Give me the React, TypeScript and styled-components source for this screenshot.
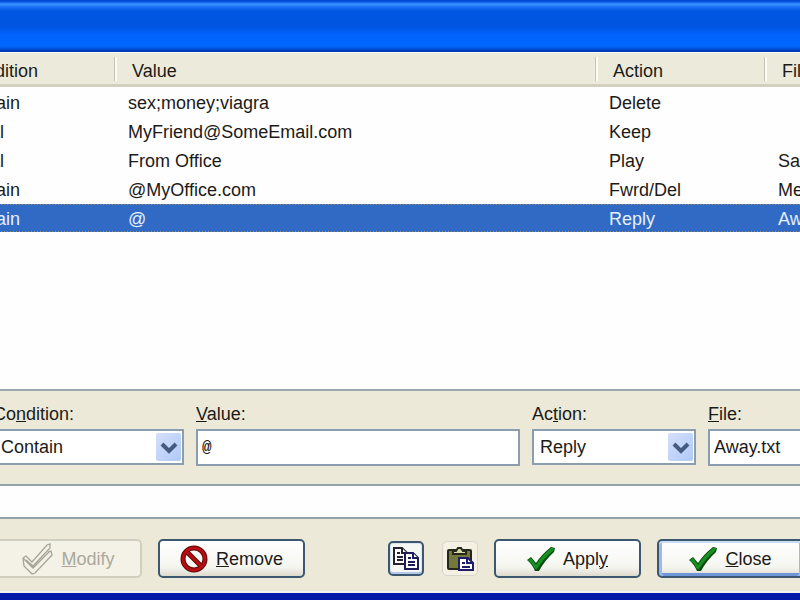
import React from "react";
import styled, { createGlobalStyle, css } from "styled-components";

const Global = createGlobalStyle`
  *, *::before, *::after { box-sizing: border-box; }
  body {
    margin: 0;
    overflow: hidden;
    background: #ece9d8;
    color: #1c1a17;
    font: 18px/24px "Liberation Sans", Arial, sans-serif;
  }
`;

const Viewport = styled.main`
  overflow: hidden;
`;

const Dialog = styled.div`
  display: flex;
  flex-direction: column;
  min-height: 100vh;
  margin: 0 -56px;
  background: #ece9d8;
  border-bottom: 7px solid #0019a8;
`;

const TitleBar = styled.header`
  height: 52px;
  flex: none;
  background: linear-gradient(
    #0040cc 0,
    #0a5ae6 2px,
    #3d95ff 4px,
    #1a70f5 7px,
    #0057e2 11px,
    #0054e0 26px,
    #0062fb 34px,
    #0068ff 46px,
    #0050d8 49px,
    #0038b4 51px
  );
`;

const RuleList = styled.section`
  flex: 1;
  background: #fefefe;
`;

const RuleTable = styled.table`
  width: 100%;
  table-layout: fixed;
  border-collapse: separate;
  border-spacing: 0 1px;
`;

const HeadCell = styled.th<{ $width?: number }>`
  position: relative;
  width: ${(p) => (p.$width ? `${p.$width}px` : "auto")};
  height: 34px;
  padding: 4px 0 0 18px;
  text-align: left;
  font-weight: normal;
  background: #ebeadb;
  border-bottom: 3px solid #d3d0c0;

  th + &::before {
    content: "";
    position: absolute;
    left: 0;
    top: 4px;
    width: 3px;
    height: 24px;
    background: #c7c5b2;
    border-right: 2px solid #fbfaf4;
  }
`;

const Row = styled.tr<{ $selected?: boolean }>`
  height: 28px;
  ${(p) =>
    p.$selected &&
    css`
      color: #e4f0fa;
      background:
        repeating-linear-gradient(90deg, #a08c58 0 1px, #316ac5 1px 3px) top / 100% 1px no-repeat,
        repeating-linear-gradient(90deg, #a08c58 0 1px, #316ac5 1px 3px) bottom / 100% 1px no-repeat,
        #316ac5;
    `}
`;

const Cell = styled.td`
  height: 28px;
  padding: 1px 0 0 14px;
  white-space: nowrap;
  overflow: hidden;
`;

const Editor = styled.form`
  display: grid;
  grid-template-columns: 191px minmax(0, 1fr) 164px 148px;
  column-gap: 12px;
  padding: 11px 0 18px 49px;
  border-top: 2px solid #9ba6ad;
`;

const Field = styled.div`
  display: flex;
  flex-direction: column;
  gap: 3px;
`;

const controlBox = css`
  width: 100%;
  color: #1c1a17;
  background: #fff;
  border: 2px solid #8b9eb0;
  border-radius: 0;
  outline: none;
  font: inherit;
`;

const TextBox = styled.input<{ $mono?: boolean }>`
  ${controlBox}
  height: 37px;
  padding: 0 4px;
  ${(p) => p.$mono && css`font-family: "Liberation Mono", monospace; font-size: 16px; font-weight: bold;`}
`;

const Combo = styled.div`
  position: relative;
`;

const Select = styled.select`
  ${controlBox}
  display: block;
  height: 36px;
  padding: 0 32px 0 6px;
  appearance: none;
`;

const ComboArrow = styled.svg`
  position: absolute;
  right: 3px;
  top: 4px;
  width: 25px;
  height: 28px;
  pointer-events: none;
`;

const StatusBox = styled.output`
  height: 35px;
  background: #fefefe;
  border: solid #93a1a9;
  border-width: 2px 0;
`;

const ButtonBar = styled.footer`
  display: flex;
  align-items: center;
  gap: 16px;
  padding: 20px 52px 13px 51px;
  border-bottom: 2px solid #f1f3ef;
`;

const IconGroup = styled.div`
  display: flex;
  align-items: center;
  gap: 18px;
  margin-left: auto;
`;

const PushButton = styled.button<{ $focused?: boolean }>`
  display: flex;
  align-items: center;
  justify-content: center;
  gap: 8px;
  width: 147px;
  height: 39px;
  padding: 0;
  color: #1c1a17;
  font: inherit;
  background: linear-gradient(#fff, #f5f5f0 75%, #dedace);
  border: 2px solid #3c5870;
  border-radius: 5px;
  ${(p) =>
    p.$focused &&
    css`
      box-shadow: inset 0 2px #cbdcfa, inset 3px 0 #9db9ea, inset -3px 0 #9db9ea,
        inset 0 -3px #6f94d8;
    `}
  &:disabled {
    color: #aaa99c;
    background: #f4f2e6;
    border-color: #d2cfc1;
  }
`;

const IconButton = styled.button<{ $flat?: boolean }>`
  display: grid;
  place-items: center;
  width: 36px;
  height: 35px;
  padding: 0;
  border: 2px solid #3c5870;
  border-radius: 5px;
  background: #f5f7f5;
  box-shadow: inset 0 -2px #b4c9e6, inset 0 0 0 1px #dbe5f2;
  ${(p) =>
    p.$flat &&
    css`
      border: 1px solid #d9d5ca;
      background: #f4f1e2;
      box-shadow: none;
    `}
`;

const Arrow = () => (
  <ComboArrow viewBox="0 0 25 28" aria-hidden="true">
    <defs>
      <linearGradient id="comboFill" x1="0" y1="0" x2="1" y2="1">
        <stop offset="0" stopColor="#d3e0fc" />
        <stop offset="1" stopColor="#b1c8f5" />
      </linearGradient>
    </defs>
    <rect width="25" height="28" rx="2" fill="url(#comboFill)" />
    <path d="M6 11L13 18L20 11" fill="none" stroke="#46597f" strokeWidth="4" />
  </ComboArrow>
);

const CheckIcon = () => (
  <svg width="28" height="26" viewBox="0 0 28 26" aria-hidden="true">
    <path d="M0 14L4 11L9 17Q15 8 24 1L28 2L27 6Q18 14 12 25L8 25Q5 18 0 14Z" fill="#0b4a12" />
    <path d="M1 14L4 12L9 19Q15 9 24 2L27 2L26 5Q17 12 10 23L8 23Q6 18 1 14Z" fill="#14921e" />
  </svg>
);

const DisabledCheckIcon = () => (
  <svg width="31" height="32" viewBox="0 0 31 32" aria-hidden="true">
    <path
      d="M1 15L4 13L10 19L25 2L28 1L28 5L11 23L4 17M1 15L2 23L10 31L13 30L30 12L29 8L26 9M1 15L11 25L28 8"
      fill="none"
      stroke="#a5a498"
      strokeWidth="1.3"
    />
  </svg>
);

const ForbidIcon = () => (
  <svg width="28" height="28" viewBox="0 0 28 28" aria-hidden="true">
    <circle cx="14" cy="14" r="11" fill="none" stroke="#5e0808" strokeWidth="5" />
    <path d="M6 6L22 22" stroke="#5e0808" strokeWidth="5" />
    <circle cx="14" cy="14" r="11" fill="none" stroke="#b50d12" strokeWidth="3" />
    <path d="M6 6L22 22" stroke="#b50d12" strokeWidth="3" />
  </svg>
);

const CopyIcon = () => (
  <svg width="28" height="26" viewBox="0 0 28 26" aria-hidden="true">
    <g fill="#fff" strokeWidth="2">
      <path d="M2 2H10L15 7V18H2Z" stroke="#24232f" />
      <path d="M10 2V7H15M5 7H8M5 11H11M5 14H11" stroke="#24232f" />
      <path d="M13 7H21L26 12V23H13Z" stroke="#1e1c5c" />
      <path d="M21 7V12H26M16 12H19M16 16H23M16 19H23" stroke="#1e1c5c" />
    </g>
  </svg>
);

const PasteIcon = () => (
  <svg width="29" height="26" viewBox="0 0 29 26" aria-hidden="true">
    <rect x="2" y="4" width="23" height="19" rx="1" fill="#74783a" stroke="#25261c" strokeWidth="2" />
    <path d="M7 8V5H10L12 2H15L17 5H20V8Z" fill="#d8d8a8" stroke="#25261c" strokeWidth="2" />
    <path d="M13 12H22L27 17V24H13Z" fill="#fff" stroke="#1e1c6c" strokeWidth="2" />
    <path d="M21 12V17H27M16 17H19M16 21H24" fill="none" stroke="#1e1c6c" strokeWidth="2" />
  </svg>
);

const rules = [
  { condition: "Contain", value: "sex;money;viagra", action: "Delete", file: "" },
  { condition: "Equal", value: "MyFriend@SomeEmail.com", action: "Keep", file: "" },
  { condition: "Equal", value: "From Office", action: "Play", file: "Sa" },
  { condition: "Contain", value: "@MyOffice.com", action: "Fwrd/Del", file: "Me" },
  { condition: "Contain", value: "@", action: "Reply", file: "Away.txt" },
];

export default function App() {
  return (
    <>
      <Global />
      <Viewport>
        <Dialog>
          <TitleBar />
          <RuleList>
            <RuleTable>
              <thead>
                <tr>
                  <HeadCell $width={170}>Condition</HeadCell>
                  <HeadCell>Value</HeadCell>
                  <HeadCell $width={169}>Action</HeadCell>
                  <HeadCell $width={92}>File</HeadCell>
                </tr>
              </thead>
              <tbody>
                {rules.map((rule, i) => (
                  <Row key={rule.value} $selected={i === rules.length - 1}>
                    <Cell>{rule.condition}</Cell>
                    <Cell>{rule.value}</Cell>
                    <Cell>{rule.action}</Cell>
                    <Cell>{rule.file}</Cell>
                  </Row>
                ))}
              </tbody>
            </RuleTable>
          </RuleList>
          <Editor onSubmit={(e) => e.preventDefault()}>
            <Field>
              <label htmlFor="condition">Co<u>n</u>dition:</label>
              <Combo>
                <Select id="condition" defaultValue="Contain">
                  <option>Contain</option>
                  <option>Equal</option>
                </Select>
                <Arrow />
              </Combo>
            </Field>
            <Field>
              <label htmlFor="value"><u>V</u>alue:</label>
              <TextBox id="value" $mono defaultValue="@" />
            </Field>
            <Field>
              <label htmlFor="action">Ac<u>t</u>ion:</label>
              <Combo>
                <Select id="action" defaultValue="Reply">
                  <option>Delete</option>
                  <option>Keep</option>
                  <option>Play</option>
                  <option>Fwrd/Del</option>
                  <option>Reply</option>
                </Select>
                <Arrow />
              </Combo>
            </Field>
            <Field>
              <label htmlFor="file"><u>F</u>ile:</label>
              <TextBox id="file" defaultValue="Away.txt" />
            </Field>
          </Editor>
          <StatusBox />
          <ButtonBar>
            <PushButton disabled><DisabledCheckIcon /><span><u>M</u>odify</span></PushButton>
            <PushButton><ForbidIcon /><span><u>R</u>emove</span></PushButton>
            <IconGroup>
              <IconButton aria-label="Copy"><CopyIcon /></IconButton>
              <IconButton aria-label="Paste" $flat><PasteIcon /></IconButton>
            </IconGroup>
            <PushButton><CheckIcon /><span>Appl<u>y</u></span></PushButton>
            <PushButton $focused><CheckIcon /><span><u>C</u>lose</span></PushButton>
          </ButtonBar>
        </Dialog>
      </Viewport>
    </>
  );
}
